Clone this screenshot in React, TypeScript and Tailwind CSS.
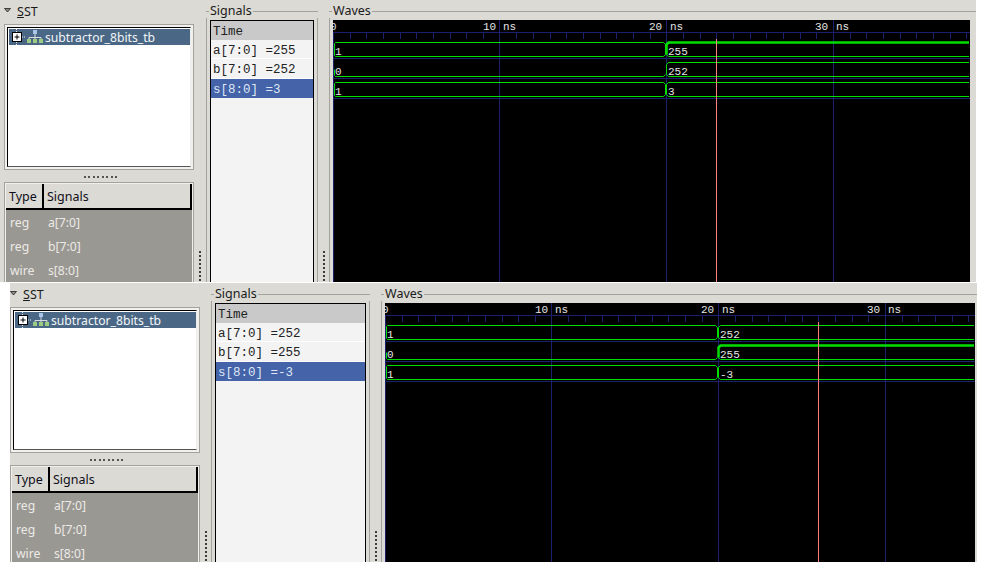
const sans = "font-['Noto_Sans','Liberation_Sans',sans-serif]";

type WinProps = {
  className: string;
  firstGap: string;
  signalsWidth: number;
  waveWidth: number;
  waveHeight: number;
  cursor: number;
  values: { name: string; value: string; after: string; before: string }[];
  thick: number;
};

function HandleH() {
  return (
    <div className="flex h-[12px] shrink-0 items-center justify-center gap-[2.5px] pl-[3px] pt-[2px]">
      {[0, 1, 2, 3, 4, 5, 6, 7].map((i) => (
        <span key={i} className="h-[2px] w-[2px] bg-[#55544f]" />
      ))}
    </div>
  );
}

function HandleV({ className }: { className: string }) {
  return (
    <div className={`flex shrink-0 flex-col items-center justify-end gap-[2px] pb-[1px] ${className}`}>
      {[0, 1, 2, 3, 4, 5, 6, 7].map((i) => (
        <span key={i} className="h-[2px] w-[2px] bg-[#3d3c38]" />
      ))}
    </div>
  );
}

function GroupLabel({ label }: { label: string }) {
  return (
    <div className="flex h-[14px] shrink-0 items-center">
      <span className="h-px w-[3px] bg-[#a3a29c]" />
      <span className="px-px text-[12.5px] leading-[14px] text-[#1a1a1a]">{label}</span>
      <span className="h-px flex-1 bg-[#a3a29c]" />
    </div>
  );
}

function TreeIcon() {
  return (
    <svg width="36" height="16" viewBox="0 0 36 16" className="shrink-0">
      <path d="M7.5 0V3M7.5 13V16M13 8H16" stroke="#e8e8e8" strokeDasharray="1 1" />
      <rect x="3.5" y="3.5" width="9" height="9" fill="#fff" stroke="#000" />
      <path d="M5.5 8H10.5M8 5.5V10.5" stroke="#000" />
      <rect x="24" y="1" width="4" height="4" fill="#a9c6ea" />
      <path d="M26 5V8M20 10V8.5H32V10M26 8V10" stroke="#d8dde2" fill="none" />
      <rect x="18" y="10" width="4" height="4" fill="#9ccc80" />
      <rect x="24" y="10" width="4" height="4" fill="#9ccc80" />
      <rect x="30" y="10" width="4" height="4" fill="#9ccc80" />
    </svg>
  );
}

function SstColumn() {
  return (
    <div className={`flex w-[190px] shrink-0 flex-col ${sans}`}>
      <div className="flex h-[24px] shrink-0 items-start pt-[4px]">
        <svg width="7" height="16" viewBox="0 0 7 16" className="shrink-0">
          <path d="M0.5 4.5H6.5L3.5 8Z" fill="#8a8a86" stroke="#222" strokeWidth="0.8" />
        </svg>
        <span className="ml-[6px] text-[12.5px] leading-[16px] text-[#1a1a1a]">
          <span className="underline">S</span>ST
        </span>
      </div>
      <div className="h-[146px] shrink-0 border border-[#a3a29c] bg-[#f1f0ec] p-[2px]">
        <div className="h-full border border-black border-r-[#ececec] border-b-[#555] bg-white pt-px pl-px">
          <div className="flex h-[16px] items-center bg-[#4a6885]">
            <TreeIcon />
            <span className="pt-[2px] text-[12.2px] leading-[14px] text-[#f2f5f8]">subtractor_8bits_tb</span>
          </div>
        </div>
      </div>
      <HandleH />
      <div className="min-h-0 flex-1 overflow-hidden border border-b-0 border-[#a3a29c] bg-[#f1f0ec] px-px pt-px">
        <div className="h-full bg-[#9a9893] text-[12.2px] text-[#eceae6]">
          <div className="flex h-[26px] text-[#10101a]">
            <div className="flex w-[38px] items-center border-r-2 border-b-2 border-r-black border-b-black bg-[#dcdad5] pt-[2px] pl-[3px] text-[12.5px]">Type</div>
            <div className="flex flex-1 items-center border-r-2 border-b-2 border-r-black border-b-black bg-[#dcdad5] pt-[2px] pl-[3px] text-[12.5px]">Signals</div>
          </div>
          <div className="pt-px">
            {[
              ['reg', 'a[7:0]'],
              ['reg', 'b[7:0]'],
              ['wire', 's[8:0]'],
            ].map(([type, name]) => (
              <div key={name} className="flex h-[24px] items-center pl-[4px]">
                <span className="w-[38px]">{type}</span>
                <span>{name}</span>
              </div>
            ))}
          </div>
        </div>
      </div>
    </div>
  );
}

function SignalsColumn({ width, values }: { width: number; values: WinProps['values'] }) {
  return (
    <div className={`flex shrink-0 flex-col pt-[4px] ${sans}`} style={{ width }}>
      <GroupLabel label="Signals" />
      <div className="flex flex-1 flex-col border-x border-[#a3a29c] px-[3px] pt-[2px]">
        <div className="flex-1 border border-b-0 border-black bg-[#f3f3f3] font-['Liberation_Mono',monospace] text-[12.5px] leading-[16px] text-[#222]">
          <div className="h-[19px] bg-[#c9c9c9] pt-[3px] pl-[2px]">Time</div>
          {values.map((v, i) => (
            <div
              key={v.name}
              className={
                i === 2
                  ? 'h-[19px] bg-[#4463a8] pt-[3px] pl-[2px] whitespace-pre text-[#dfe6f5]'
                  : i === 1
                    ? 'h-[20px] border-b border-white pt-[3px] pl-[2px] whitespace-pre'
                    : 'h-[19px] border-b border-white pt-[3px] pl-[2px] whitespace-pre'
              }
            >
              {v.name} ={v.value}
            </div>
          ))}
        </div>
      </div>
    </div>
  );
}

function Waves({ width, height, cursor, values, thick }: Pick<WinProps, 'cursor' | 'values' | 'thick'> & { width: number; height: number }) {
  const ticks: number[] = [];
  for (let i = 1; i * 16.67 < width; i++) if (i % 10) ticks.push(Math.round(i * 16.67) + 0.5);
  const end = width - 1;
  const blue = '#1c206c';
  const green = '#00e000';
  const mono = "font-['Liberation_Mono',monospace] text-[11px] fill-[#e4e4e4]";

  return (
    <svg width={width} height={height} className="block bg-black" viewBox={`0 0 ${width} ${height}`}>
      <g shapeRendering="crispEdges">
        <path d={`M0 12.5H${width}M0.5 12V${height}`} stroke={blue} />
        {[166.5, 333.5, 500.5].map((x) => (
          <path key={x} d={`M${x} 0V${height}`} stroke={blue} />
        ))}
        {ticks.map((x) => (
          <path key={x} d={`M${x} 12V19`} stroke={blue} />
        ))}
        {[38.5, 58.5, 78.5].map((y) => (
          <path key={y} d={`M0 ${y}H${width}`} stroke={blue} />
        ))}
      </g>
      <text x="-3" y="10" className={mono}>0</text>
      <text x="150" y="10" className={mono}>10</text>
      <text x="170" y="10" className={mono}>ns</text>
      <text x="316" y="10" className={mono}>20</text>
      <text x="337" y="10" className={mono}>ns</text>
      <text x="482" y="10" className={mono}>30</text>
      <text x="503" y="10" className={mono}>ns</text>
      {values.map((v, i) => {
        const top = 22.5 + i * 20;
        const bot = top + 14;
        return (
          <g key={v.name}>
            <g fill="none" stroke={green}>
              {i === 1 ? (
                <path d={`M1.5 ${bot - 7}V${bot - 1}L2.5 ${bot}H330.5L332.5 ${bot - 2}`} />
              ) : (
                <path d={`M1.5 ${bot - 1}V${top + 1}L2.5 ${top}H330.5L332.5 ${top + 2}V${bot - 2}L330.5 ${bot}H2.5Z`} />
              )}
              <path d={`M333.5 ${bot - 2}V${top + 2}L335.5 ${top}H${end}`} strokeWidth={i === thick ? 2.5 : 1} />
              <path d={`M333.5 ${bot - 2}L335.5 ${bot}H${end}`} />
            </g>
            <text x="2" y={bot - 1.5} className={mono}>{v.before}</text>
            <text x="335" y={bot - 1.5} className={mono}>{v.after}</text>
          </g>
        );
      })}
      <path d={`M${cursor + 0.5} 19V${height}`} stroke="#ff8080" shapeRendering="crispEdges" />
    </svg>
  );
}

function WaveWindow({ className, firstGap, signalsWidth, waveWidth, waveHeight, cursor, values, thick }: WinProps) {
  return (
    <div className={`flex overflow-hidden bg-[#dcdad5] ${className}`}>
      <SstColumn />
      <HandleV className={firstGap} />
      <SignalsColumn width={signalsWidth} values={values} />
      <HandleV className="w-[11px]" />
      <div className={`flex flex-1 flex-col pt-[4px] ${sans}`}>
        <GroupLabel label="Waves" />
        <div className="flex-1 border-l border-[#a3a29c] pt-[2px] pl-[3px]">
          <Waves width={waveWidth} height={waveHeight} cursor={cursor} values={values} thick={thick} />
        </div>
      </div>
    </div>
  );
}

export default function App() {
  return (
    <div className="h-[580px] w-[988px] overflow-hidden bg-white">
      <WaveWindow
        className="h-[282px] w-[976px] pl-[4px]"
        firstGap="w-[12px]"
        signalsWidth={112}
        waveWidth={637}
        waveHeight={262}
        cursor={383}
        thick={0}
        values={[
          { name: 'a[7:0]', value: '255', before: '1', after: '255' },
          { name: 'b[7:0]', value: '252', before: '0', after: '252' },
          { name: 's[8:0]', value: '3', before: '1', after: '3' },
        ]}
      />
      <div className="h-px" />
      <WaveWindow
        className="ml-[10px] h-[279px] w-[967px]"
        firstGap="w-[11px]"
        signalsWidth={159}
        waveWidth={590}
        waveHeight={259}
        cursor={433}
        thick={1}
        values={[
          { name: 'a[7:0]', value: '252', before: '1', after: '252' },
          { name: 'b[7:0]', value: '255', before: '0', after: '255' },
          { name: 's[8:0]', value: '-3', before: '1', after: '-3' },
        ]}
      />
    </div>
  );
}
